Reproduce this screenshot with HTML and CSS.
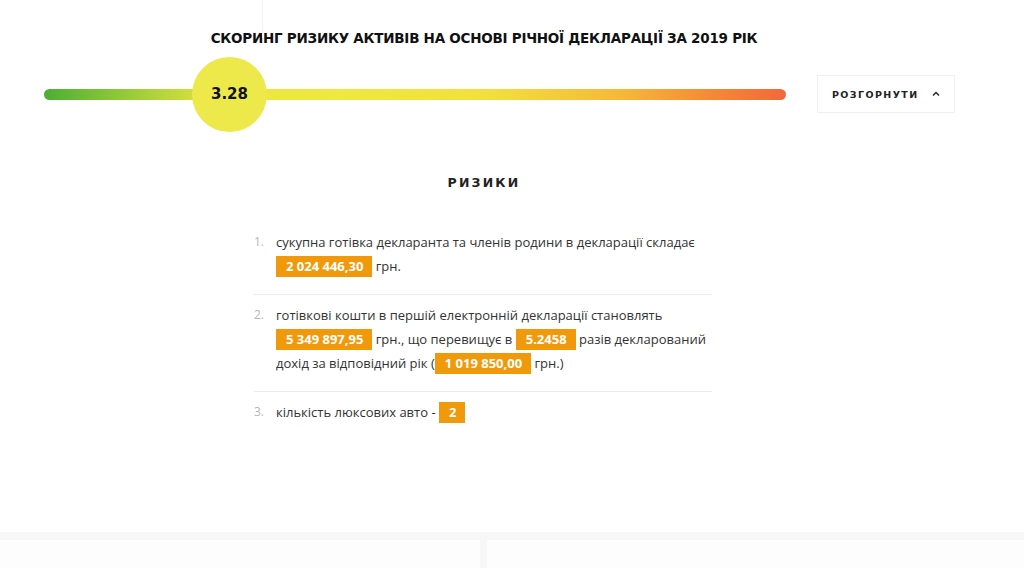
FILE: index.html
```html
<!DOCTYPE html>
<html lang="uk">
<head>
<meta charset="utf-8">
<title>Скоринг ризику</title>
<link rel="stylesheet" href="styles.css">
</head>
<body>
<div class="page">
  <header class="head">
    <h1 class="title">СКОРИНГ РИЗИКУ АКТИВІВ НА ОСНОВІ РІЧНОЇ ДЕКЛАРАЦІЇ ЗА 2019 РІК</h1>
  </header>
  <div class="score-row">
    <div class="bar">
      <div class="score">3.28</div>
    </div>
    <button class="toggle">
      <span class="toggle-text">РОЗГОРНУТИ</span>
      <svg class="chev" width="8" height="6" viewBox="0 0 8 6"><path d="M1 4.5 L4 1.5 L7 4.5" fill="none" stroke="#222" stroke-width="1.4"/></svg>
    </button>
  </div>
  <section class="risks">
    <h2 class="risks-title">РИЗИКИ</h2>
    <ol class="risk-list">
      <li class="risk"><span class="num">1.</span><p class="txt">сукупна готівка декларанта та членів родини в декларації складає <span class="badge">2 024 446,30</span> грн.</p></li>
      <li class="risk"><span class="num">2.</span><p class="txt">готівкові кошти в першій електронній декларації становлять <span class="badge">5 349 897,95</span> грн., що перевищує в <span class="badge">5.2458</span> разів декларований дохід за відповідний рік (<span class="badge">1 019 850,00</span> грн.)</p></li>
      <li class="risk"><span class="num">3.</span><p class="txt">кількість люксових авто - <span class="badge">2</span></p></li>
    </ol>
  </section>
</div>
<footer class="bottom">
  <div class="panel panel-left"></div>
  <div class="panel panel-right"></div>
</footer>
</body>
</html>
```

FILE: styles.css
```css
* { box-sizing: border-box; }
html, body { margin: 0; padding: 0; background: #fff; }
body {
  font-family: "Open Sans", "DejaVu Sans", sans-serif;
  color: #333;
  width: 1024px;
  height: 568px;
  overflow: hidden;
}
.page { height: 532px; position: relative; }
.page::before {
  content: "";
  position: absolute;
  left: 262px; top: 0;
  width: 1px; height: 38px;
  background: #f3f3f3;
}
.head { padding-top: 29px; width: 968px; }
.title {
  margin: 0;
  text-align: center;
  font-family: "DejaVu Sans", sans-serif;
  font-weight: 700;
  font-size: 13.5px;
  letter-spacing: -0.25px;
  color: #111;
  line-height: 18px;
}
.score-row {
  display: flex;
  align-items: center;
  margin-top: 28px;
  padding-left: 44px;
}
.bar {
  position: relative;
  width: 742px;
  height: 11px;
  border-radius: 6px;
  background: linear-gradient(90deg, #4cae34 0%, #9ccc3a 12%, #e9e640 24%, #efe742 40%, #f2df3e 60%, #f5b83a 78%, #f38a37 90%, #f2683a 100%);
}
.score {
  position: absolute;
  left: 148px; top: -32px;
  width: 75px; height: 75px;
  border-radius: 50%;
  background: #ede94b;
  display: flex; align-items: center; justify-content: center;
  font-family: "DejaVu Sans", sans-serif;
  font-weight: 700;
  font-size: 15px;
  color: #111;
}
.toggle {
  margin-left: 31px;
  width: 138px; height: 38px;
  background: #fff;
  border: 1px solid #f0f0f0;
  display: flex; align-items: center;
  padding: 0 14px 0 14px;
  justify-content: space-between;
  font-family: "DejaVu Sans", sans-serif;
  font-weight: 700;
  font-size: 9.5px;
  letter-spacing: 1.4px;
  color: #222;
  cursor: pointer;
}
.chev { display: block; }
.risks { width: 968px; }
.risks-title {
  margin: 61px 0 0 0;
  text-align: center;
  font-family: "DejaVu Sans", sans-serif;
  font-weight: 700;
  font-size: 12.5px;
  letter-spacing: 2.2px;
  color: #222;
  line-height: 18px;
}
.risk-list {
  list-style: none;
  margin: 38px 0 0 254px;
  padding: 0;
  width: 458px;
}
.risk {
  display: flex;
  padding: 0 0 16px 0;
  margin-bottom: 8px;
  border-bottom: 1px solid #ececec;
}
.risk:last-child { border-bottom: none; }
.num {
  width: 22px;
  flex: none;
  font-size: 12px;
  color: #b5b5b5;
  line-height: 24px;
}
.txt {
  margin: 0;
  font-size: 13px;
  line-height: 24px;
  color: #333;
}
.badge {
  display: inline-block;
  background: #f0990b;
  color: #fff;
  font-weight: 700;
  padding: 0 9px 0 10px;
  line-height: 21px;
  vertical-align: baseline;
}
.bottom {
  height: 36px;
  background: #f7f7f7;
  padding-top: 8px;
  display: flex;
  gap: 7px;
}
.panel { background: #fdfdfd; height: 28px; }
.panel-left { width: 480px; }
.panel-right { flex: 1; }
```
